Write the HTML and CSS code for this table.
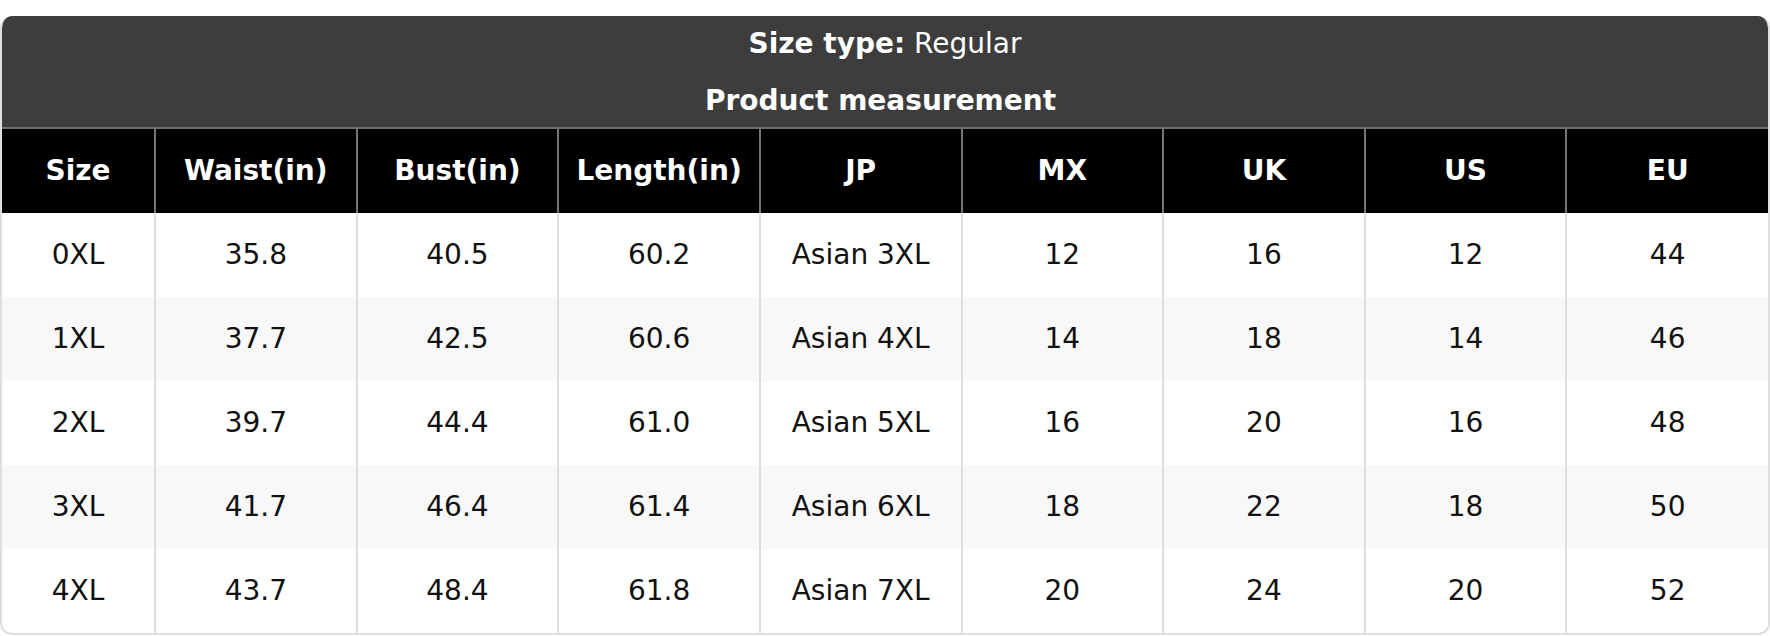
FILE: index.html
```html
<!DOCTYPE html>
<html lang="en">
<head>
<meta charset="utf-8">
<title>Size chart</title>
<link rel="stylesheet" href="styles.css">
</head>
<body>
<div class="chart">
  <div class="caption">
    <div class="caption-line"><b>Size type:</b> Regular</div>
    <div class="caption-line caption-title">Product measurement</div>
  </div>
  <table class="size-table">
    <colgroup>
      <col class="col-size">
      <col><col><col><col><col><col><col><col>
    </colgroup>
    <thead>
      <tr>
        <th>Size</th><th>Waist(in)</th><th>Bust(in)</th><th>Length(in)</th><th>JP</th><th>MX</th><th>UK</th><th>US</th><th>EU</th>
      </tr>
    </thead>
    <tbody>
      <tr><td>0XL</td><td>35.8</td><td>40.5</td><td>60.2</td><td>Asian 3XL</td><td>12</td><td>16</td><td>12</td><td>44</td></tr>
      <tr><td>1XL</td><td>37.7</td><td>42.5</td><td>60.6</td><td>Asian 4XL</td><td>14</td><td>18</td><td>14</td><td>46</td></tr>
      <tr><td>2XL</td><td>39.7</td><td>44.4</td><td>61.0</td><td>Asian 5XL</td><td>16</td><td>20</td><td>16</td><td>48</td></tr>
      <tr><td>3XL</td><td>41.7</td><td>46.4</td><td>61.4</td><td>Asian 6XL</td><td>18</td><td>22</td><td>18</td><td>50</td></tr>
      <tr><td>4XL</td><td>43.7</td><td>48.4</td><td>61.8</td><td>Asian 7XL</td><td>20</td><td>24</td><td>20</td><td>52</td></tr>
    </tbody>
  </table>
</div>
</body>
</html>
```

FILE: styles.css
```css
html, body {
  margin: 0;
  padding: 0;
  background: #ffffff;
}

body {
  font-family: "DejaVu Sans", "Liberation Sans", sans-serif;
  color: #111111;
}

.chart {
  margin-top: 16px;
  border: 2px solid #dedede;
  border-top: none;
  border-radius: 12px;
  overflow: hidden;
}

.caption {
  background: #3d3d3d;
  color: #ffffff;
  text-align: center;
  font-size: 28px;
  padding: 7px 0 5px;
  display: flex;
  flex-direction: column;
  gap: 15px;
  border-bottom: 2px solid #6e6e6e;
}

.caption-line {
  line-height: 42px;
}

.caption-title {
  font-weight: bold;
  padding-right: 9px;
}

.size-table {
  width: 100%;
  table-layout: fixed;
  border-collapse: collapse;
  font-size: 28px;
  text-align: center;
}

.col-size {
  width: 153px;
}

.size-table th {
  background: #000000;
  color: #ffffff;
  font-weight: bold;
  height: 83px;
  padding: 0 0 1px;
  border-left: 2px solid #767676;
}

.size-table td {
  height: 83px;
  padding: 0 0 1px;
  border-left: 2px solid #dddddd;
  color: #111111;
}

.size-table th:first-child,
.size-table td:first-child {
  border-left: none;
}

.size-table tbody tr:nth-child(even) td {
  background: #f8f8f8;
}
```
